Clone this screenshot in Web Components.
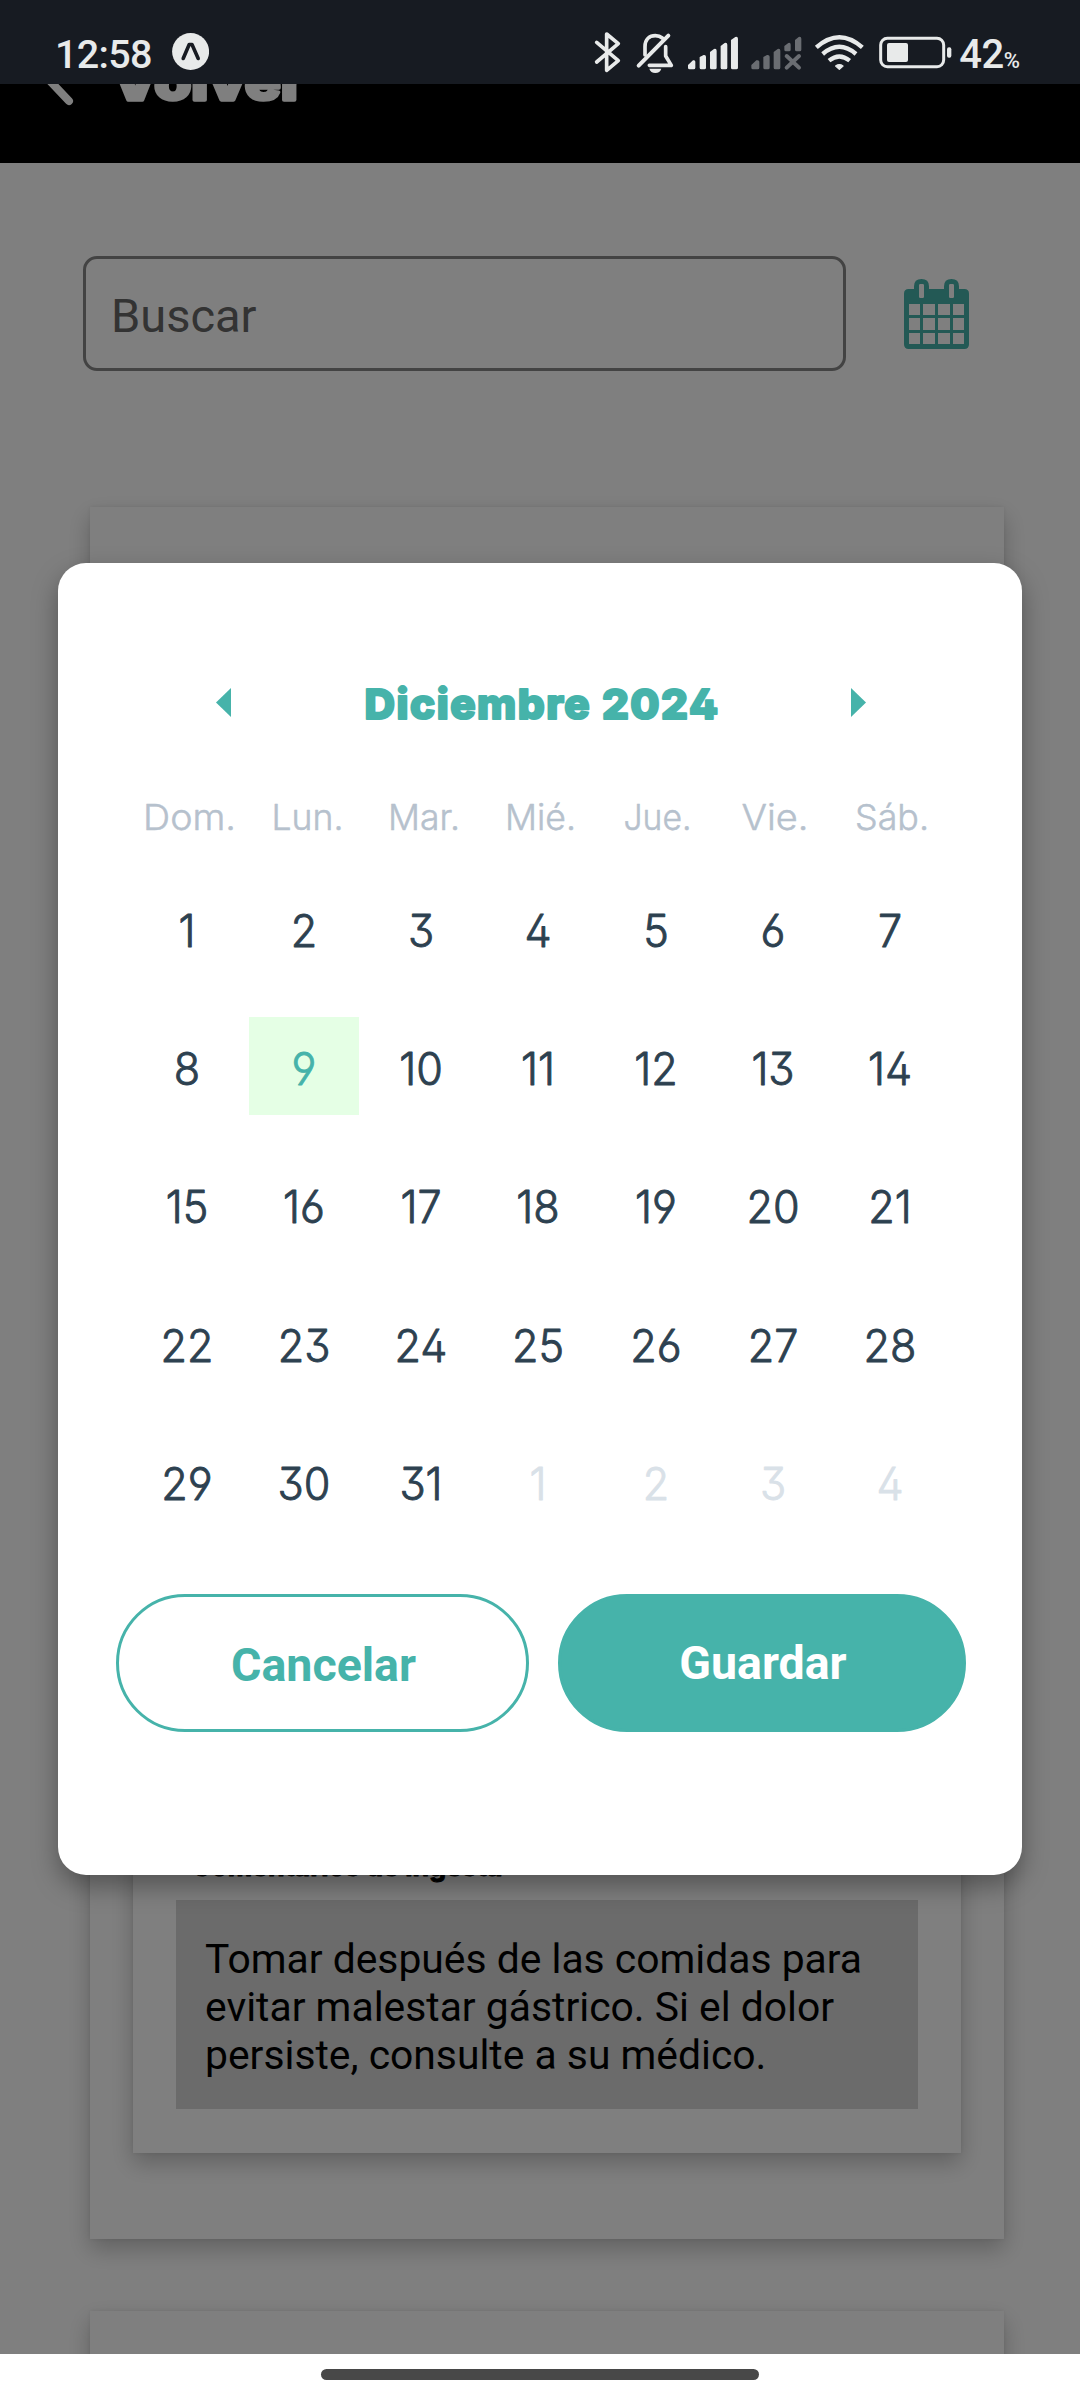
<!DOCTYPE html>
<html lang="es">
<head>
<meta charset="utf-8">
<title>Calendario</title>
<style>
html,body{margin:0;padding:0;background:#fff}
body{font-family:Roboto,"Liberation Sans",sans-serif}
</style>
</head>
<body>
<phone-screen></phone-screen>
<script>
const define=(name,html,init)=>customElements.define(name,class extends HTMLElement{
  connectedCallback(){
    if(this.shadowRoot)return;
    this.attachShadow({mode:'open'}).innerHTML=typeof html==='function'?html(this):html;
    if(init)init(this);
  }
});

/* Label in the rounded brand face: strokes with round joins soften the corners. */
define('round-label',el=>{
  const g=(n,d)=>el.getAttribute(n)??d;
  const w=+g('w',110),h=+g('h',98),b=+g('base',68),sx=+g('sx',1),len=g('len',''),dx=+g('dx',0);
  return `<style>:host{display:block;width:${w}px;height:${h}px}svg{display:block;overflow:visible}
  text{font-family:Inter,"Liberation Sans",sans-serif;font-size:${g('size',44)}px;font-weight:${g('weight',300)};
  font-feature-settings:"cv02","cv03","cv04","cv09";fill:currentColor;stroke:currentColor;stroke-width:${g('stroke',1)}px;stroke-linejoin:round;letter-spacing:${g('ls',0)}px}</style>
  <svg width="${w}" height="${h}"><text transform="translate(${w/2+dx} ${b}) scale(${sx} 1)" text-anchor="middle" ${len?`textLength="${len}" lengthAdjust="spacingAndGlyphs"`:''}>${g('text','')}</text></svg>`;
});

define('status-bar',`<style>
:host{display:flex;height:84px;background:#171b22;color:#e8eaea;position:relative;z-index:2}
svg{display:block;height:84px;flex:none}
.time{margin-left:55px;width:117px;height:59px;padding-top:25px;font:500 39.500px/59px Roboto,sans-serif;letter-spacing:-.7px}
.right{display:flex;margin-left:384px}
.pct{display:flex;align-items:baseline;font:500 40px/59px Roboto,sans-serif;padding:25px 0 0 3px;height:59px;letter-spacing:-.5px}
.pct small{font-size:22px;line-height:1;font-weight:500;margin-left:0;letter-spacing:-1px}
</style>
<div class="time">12:58</div>
<svg width="37" viewBox="0 0 37 84"><circle cx="18.6" cy="51.5" r="18.5" fill="#e8eaea"/><path d="M11.200 58.500 17.200 44.500H20L26.200 58.500" fill="none" stroke="#171b22" stroke-width="3.600" stroke-linecap="round" stroke-linejoin="round"/></svg>
<div class="right">
<svg width="38.3" viewBox="100 0 115 252" fill="none" stroke="#e8eaea" stroke-width="11" stroke-linejoin="round" stroke-linecap="round"><path d="M111 127 176 182 141 211V102L176 131 111 186"/></svg>
<svg width="50" viewBox="215 0 150 252"><g fill="none" stroke="#e8eaea" stroke-width="11" stroke-linecap="round" stroke-linejoin="round"><path d="M257 165V140C257 117 271 107 288 107 297 107 304 110 309 114M319 140V168L336 196H270"/><path d="M238 197 327 107" stroke-width="12"/></g><path d="M270 206H306C304 214 297 219 288 219S272 214 270 206Z" fill="#e8eaea"/></svg>
<svg width="63.3" viewBox="365 0 190 252" fill="#e8eaea"><path d="M386 203V195L401 181Q408 179 408 185V203Q408 208 403 208H391Q386 208 386 203ZM421 203V171L433 165Q440 164 440 170V203Q440 208 435 208H426Q421 208 421 203ZM452 203V156L464 147Q472 145 472 152V203Q472 208 467 208H457Q452 208 452 203ZM484 203V138L496 129Q504 127 504 134V203Q504 208 499 208H489Q484 208 484 203ZM515 203V120L528 111Q536 109 536 116V203Q536 208 531 208H520Q515 208 515 203Z"/></svg>
<svg width="65" viewBox="555 0 195 252" fill="#6a6d72"><path d="M574 203V195L589 181Q598 179 598 185V203Q598 208 593 208H579Q574 208 574 203ZM610 203V171L621 165Q629 164 629 170V203Q629 208 624 208H615Q610 208 610 203ZM641 203V156L653 147Q661 145 661 152V203Q661 208 656 208H646Q641 208 641 203ZM673 149V138L685 129Q692 127 692 134V149Q692 154 687 154H678Q673 154 673 149ZM705 149V120L716 111Q724 109 724 116V149Q724 154 719 154H710Q705 154 705 149Z"/><path d="M680 168 717 203M717 168 680 203" stroke="#6a6d72" stroke-width="12" stroke-linecap="round"/></svg>
<svg width="60" viewBox="750 0 180 252" fill="none" stroke="#e8eaea" stroke-width="13"><path d="M769 142Q838 81 907 142M788 162Q838 119 888 162M807 182Q838 157 869 182"/><path d="M827 198Q838 190 849 198L838 208Z" fill="#e8eaea" stroke-width="4" stroke-linejoin="round"/></svg>
<svg width="86.7" viewBox="930 0 260 252"><rect x="962" y="115" width="189" height="85" rx="20" fill="none" stroke="#e8eaea" stroke-width="9"/><rect x="981" y="129" width="63" height="57" rx="6" fill="#e8eaea"/><rect x="1161" y="142" width="13" height="31" rx="6" fill="#e8eaea"/></svg>
<div class="pct">42<small>%</small></div>
</div>`);

define('app-header',`<style>
:host{display:flex;height:79px;background:#000;color:#fff;overflow:hidden}
svg{display:block;flex:none}
round-label{margin-left:32px}
</style>
<svg width="80" height="79"><path d="M69 17 41.500-12 69-41" fill="none" stroke="#fff" stroke-width="8" stroke-linecap="round" stroke-linejoin="round"/></svg>
<round-label text="Volver" w="194" h="79" base="15.500" size="51" weight="800" stroke="3.500" len="194"></round-label>`);

define('search-row',`<style>
:host{display:flex;align-items:center;padding:93px 0 0 83px}
.field{box-sizing:border-box;width:763px;height:115px;border:3px solid #878787;border-radius:14px;padding:2px 25px 0;font:400 47px/110px Roboto,sans-serif;color:#666}
svg{display:block;margin-left:58px}
</style>
<div class="field">Buscar</div>
<svg width="65" height="70" viewBox="0 0 195 210"><path fill="#46b3aa" fill-rule="evenodd" d="M14 30H30V22Q30 0 52.500 0T75 22V30H120V22Q120 0 142.500 0T165 22V30H181Q195 30 195 44V196Q195 210 181 210H14Q0 210 0 196V44Q0 30 14 30ZM49 15Q45 15 45 19V53Q45 57 49 57H56Q60 57 60 53V19Q60 15 56 15ZM139 15Q135 15 135 19V53Q135 57 139 57H146Q150 57 150 53V19Q150 15 146 15ZM15 75V108H48V75ZM57 75V108H93V75ZM102 75V108H138V75ZM147 75V108H180V75ZM15 117V153H48V117ZM57 117V153H93V117ZM102 117V153H138V117ZM147 117V153H180V117ZM15 162V195H48V162ZM57 162V195H93V162ZM102 162V195H138V162ZM147 162V195H180V162Z"/></svg>`);

define('elevated-card',`<style>
:host{display:flex;flex-direction:column;justify-content:flex-end;box-sizing:border-box;background:#fff;box-shadow:0 10px 22px rgba(0,0,0,.24),0 0 4px rgba(0,0,0,.07)}
</style><slot></slot>`);

define('intake-comment',`<style>
:host{display:block;padding:0 43px 44px}
.box{box-sizing:border-box;height:209px;background:#d6d6d6;padding:35px 29px;font:400 40.850px/48px Roboto,sans-serif;color:#000;white-space:pre}
round-label{margin-left:16px}
</style>
<round-label text="Comentarios de ingesta" w="310" h="60" base="36" size="28" weight="700" stroke="1" len="311"></round-label>
<div class="box">Tomar después de las comidas para
evitar malestar gástrico. Si el dolor
persiste, consulte a su médico.</div>`);

define('month-calendar',()=>{
  const teal='#46b3aa';
  const days=[['Dom.',90,2.500],['Lun.',69,3.5],['Mar.',69,3],['Mié.',68,2.500],['Jue.',65,1.500],['Vie.',64,2],['Sáb.',71,2]];
  const cells=[...Array(31)].map((_,i)=>[i+1,i+1===9?'today':'']).concat([1,2,3,4].map(n=>[n,'off']));
  return `<style>
:host{display:block;width:821px;margin-left:70px}
.head{display:flex;align-items:center;height:120px;color:${teal}}
.head svg{display:block;margin-bottom:2px}
.head .prev{margin-left:88px}.title{margin:0 133px 0 135px}
.week{display:grid;grid-template-columns:repeat(7,1fr);justify-items:center;margin-top:17px;height:98.700px;color:#b6c1cd}
.days{display:grid;grid-template-columns:repeat(7,1fr);justify-items:center;row-gap:40.330px;color:#2d4150}
.today{background:#e5ffe5;color:${teal}}.off{color:#d9e1e8}
</style>
<div class="head"><svg class="prev" width="15" height="29"><path d="M15 0V29L0 14.500Z" fill="${teal}"/></svg>
<round-label class="title" text="Diciembre 2024" w="352" h="120" base="76" size="41.500" weight="800" stroke="2.200" ls="1.500" len="355"></round-label>
<svg width="15" height="29"><path d="M0 0V29L15 14.500Z" fill="${teal}"/></svg></div>
<div class="week">${days.map(([d,w,x])=>`<round-label text="${d}" w="110" h="90" base="50" size="35.500" weight="300" stroke=".5" len="${w+3}" dx="${x}"></round-label>`).join('')}</div>
<div class="days">${cells.map(([n,c])=>`<round-label class="${c}" text="${n}" sx=".97" size="44.500" stroke=".9"></round-label>`).join('')}</div>`;
});

define('pill-button',`<style>
:host{box-sizing:border-box;display:flex;justify-content:center;align-items:center;height:138px;border-radius:69px;border:3px solid #46b3aa;color:#46b3aa;font:700 46.500px/54px Roboto,sans-serif;padding:3px 0 0 2px}
:host([primary]){background:#46b3aa;color:#fff;padding-top:0;padding-bottom:1px}
</style><slot></slot>`);

define('date-dialog',`<style>
:host{display:flex;flex-direction:column;box-sizing:border-box;width:964px;height:1312px;padding-top:80px;background:#fff;border-radius:28px;box-shadow:0 11px 26px rgba(0,0,0,.34)}
.actions{display:flex;gap:29px;padding:64px 0 0 58px}
.a{width:413px}.b{width:408px}
</style>
<month-calendar></month-calendar>
<div class="actions"><pill-button class="a">Cancelar</pill-button><pill-button class="b" primary>Guardar</pill-button></div>`);

define('nav-bar',`<style>:host{display:flex;height:46px;background:#fff;justify-content:center;align-items:flex-start;position:relative;z-index:2}
i{display:block;width:438px;height:11px;border-radius:6px;background:#484848;margin-top:15px}</style><i></i>`);

define('phone-screen',`<style>
:host{display:flex;flex-direction:column;width:1080px;height:2400px;overflow:hidden}
.view{position:relative;height:2270px;overflow:hidden;background:#fff}
.card{margin:136px 76px 0 90px;height:1732px;padding:0 43px 86px}
.inner{height:1560px}
.next{margin:72px 76px 0 90px;height:300px}
.scrim{position:absolute;inset:0;background:rgba(0,0,0,.5);display:flex;justify-content:center;align-items:flex-start;padding-top:479px}
</style>
<status-bar></status-bar>
<div class="view">
<app-header></app-header><search-row></search-row>
<elevated-card class="card"><elevated-card class="inner"><intake-comment></intake-comment></elevated-card></elevated-card>
<elevated-card class="next"></elevated-card>
<div class="scrim"><date-dialog></date-dialog></div>
</div>
<nav-bar></nav-bar>`);
</script>
</body>
</html>
